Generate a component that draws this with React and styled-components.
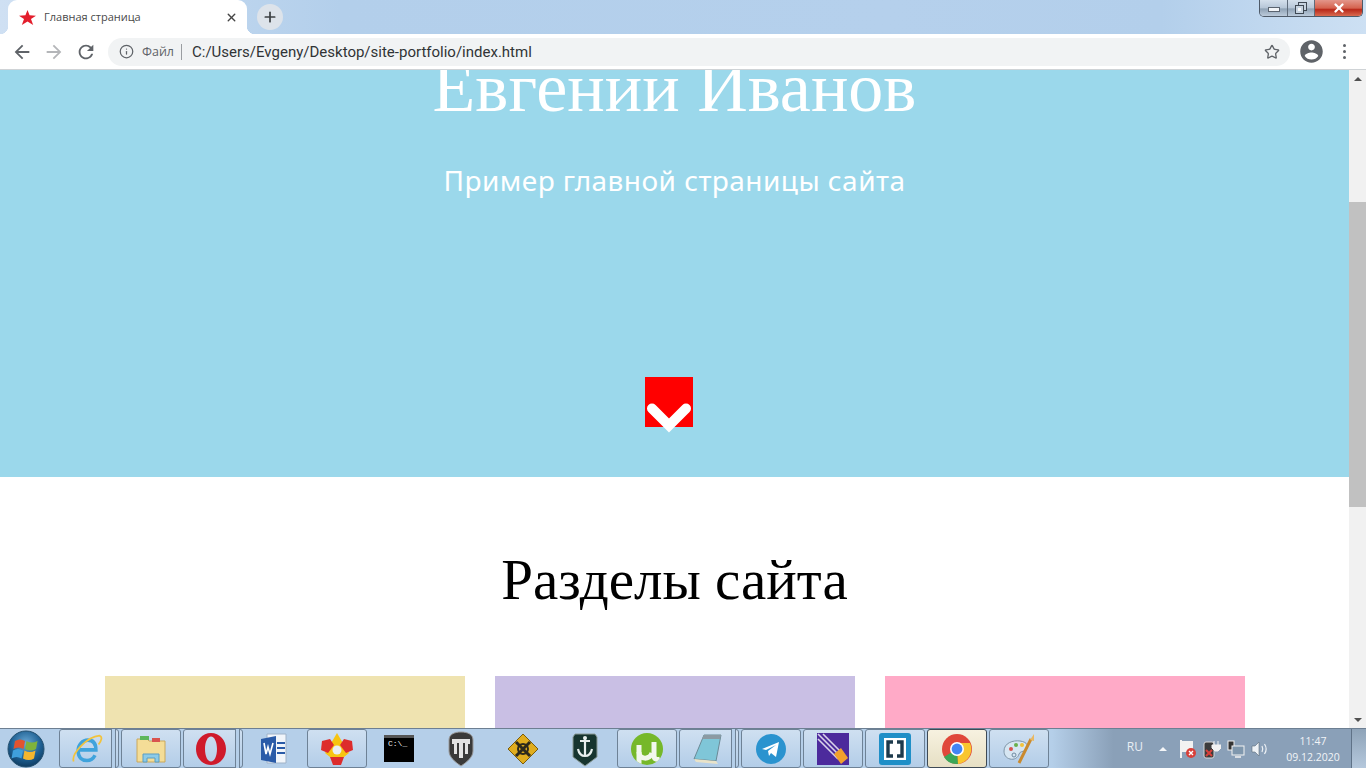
import styled, { createGlobalStyle } from "styled-components";
import { Info, Star, X, Plus } from "lucide-react";

const GlobalStyle = createGlobalStyle`
  html, body {
    margin: 0;
    padding: 0;
    width: 100%;
    height: 100%;
    overflow: hidden;
  }
  * {
    box-sizing: border-box;
  }
`;

const sections = ["#efe3b0", "#c9bfe4", "#ffaac7"];

const arrowPath = "M20 11H7.83l5.59-5.59L12 4l-8 8 8 8 1.41-1.41L7.83 13H20v-2z";

export default function App() {
  return (
    <>
      <GlobalStyle />
      <Screen>
        <TabStrip>
          <Tab>
            <StarIcon />
            <TabTitle>Главная страница</TabTitle>
            <X size={13} strokeWidth={2.6} color="#444" />
          </Tab>
          <NewTab>
            <Plus size={16} strokeWidth={2.6} color="#3c4043" />
          </NewTab>
          <WindowButtons>
            <WinButton $w={28}>
              <MinGlyph />
            </WinButton>
            <WinButton $w={27}>
              <RestoreGlyph viewBox="0 0 12 12">
                <rect x="3.500" y="0.500" width="8" height="8" fill="#c6d3e0" stroke="#3f4954" />
                <rect x="0.500" y="3.500" width="8" height="8" fill="#c6d3e0" stroke="#3f4954" />
                <rect x="3" y="6" width="3" height="3" fill="#f4f6f8" />
              </RestoreGlyph>
            </WinButton>
            <CloseButton>
              <X size={14} strokeWidth={4} color="#fff" />
            </CloseButton>
          </WindowButtons>
        </TabStrip>

        <Toolbar>
          <NavIcon d={arrowPath} color="#5f6368" />
          <NavIcon d={arrowPath} color="#b4b6b9" flip />
          <NavIcon
            d="M17.65 6.35A7.958 7.958 0 0 0 12 4c-4.42 0-7.99 3.58-7.99 8s3.57 8 7.99 8c3.73 0 6.84-2.55 7.73-6h-2.08A5.99 5.99 0 0 1 12 18c-3.31 0-6-2.69-6-6s2.69-6 6-6c1.66 0 3.14.69 4.22 1.78L13 11h7V4l-2.35 2.35z"
            color="#5f6368"
          />
          <Omnibox>
            <Info size={15} strokeWidth={2} color="#5f6368" />
            <FileLabel>Файл</FileLabel>
            <Url>C:/Users/Evgeny/Desktop/site-portfolio/index.html</Url>
            <Star size={16} strokeWidth={2} color="#5f6368" />
          </Omnibox>
          <Avatar viewBox="0 0 24 24">
            <path
              fill="#5f6368"
              d="M12 2C6.48 2 2 6.48 2 12s4.48 10 10 10 10-4.48 10-10S17.52 2 12 2zm0 3c1.66 0 3 1.34 3 3s-1.34 3-3 3-3-1.34-3-3 1.34-3 3-3zm0 14.2c-2.5 0-4.71-1.28-6-3.22.03-1.99 4-3.08 6-3.08 1.99 0 5.97 1.09 6 3.08-1.29 1.94-3.5 3.22-6 3.22z"
            />
          </Avatar>
          <MenuDots>
            <i />
            <i />
            <i />
          </MenuDots>
        </Toolbar>

        <Viewport>
          <Page>
            <Hero>
              <HeroTitle>Евгении Иванов</HeroTitle>
              <HeroSub>Пример главной страницы сайта</HeroSub>
              <ScrollDown>
                <Chevron viewBox="0 0 48 50">
                  <polyline points="7,31.5 24,48.5 41,31.5" fill="none" stroke="#fff" strokeWidth="10" strokeLinecap="round" />
                </Chevron>
              </ScrollDown>
            </Hero>
            <Sections>
              <SectionTitle>Разделы сайта</SectionTitle>
              <Cards>
                {sections.map((c) => (
                  <Card key={c} $bg={c} />
                ))}
              </Cards>
            </Sections>
          </Page>
          <Scrollbar>
            <ScrollArrow $up />
            <ScrollTrack>
              <ScrollThumb />
            </ScrollTrack>
            <ScrollArrow />
          </Scrollbar>
        </Viewport>

        <Taskbar>
          <StartOrb>
            <svg width="38" height="38" viewBox="0 0 38 38">
              <defs>
                <radialGradient id="orb" cx="50%" cy="35%" r="70%">
                  <stop offset="0" stopColor="#6aaad6" />
                  <stop offset="0.6" stopColor="#1d5f92" />
                  <stop offset="1" stopColor="#0d3557" />
                </radialGradient>
              </defs>
              <circle cx="19" cy="19" r="18" fill="url(#orb)" stroke="#24506f" />
              <path d="M8 11q5-3 10 0l-1.500 8q-5-3-10 0z" fill="#e2532f" />
              <path d="M19.500 11q5 3 11 0l-1.500 8q-5 3-11 0z" fill="#7fb33c" />
              <path d="M6 20.500q5-3 10 0l-1.500 8q-5-3-10 0z" fill="#3f9fdc" />
              <path d="M17.500 20.500q5 3 11 0l-1.500 8q-5 3-11 0z" fill="#f4b62e" />
            </svg>
          </StartOrb>
          <Pinned>
            <Slot $on $stack>
              <svg width="32" height="34" viewBox="0 0 36 36">
                <path d="M8 19h20c0-8-4-11-9-11-6 0-11 5-11 12 0 8 5 11 10 11 4 0 7-2 9-6" fill="none" stroke="#3fa3dc" strokeWidth="4" />
                <path d="M3 32C0 24 18 4 32 3c4 1 2 6-1 10" fill="none" stroke="#f2c33c" strokeWidth="2" />
              </svg>
            </Slot>
            <Slot $on>
              <svg width="34" height="34" viewBox="0 0 34 34">
                <path d="M3 7h10l2 2h16v21H3z" fill="#f4dd97" stroke="#c9a85c" />
                <rect x="6" y="4" width="9" height="4" fill="#5db75d" />
                <rect x="18" y="6" width="8" height="4" fill="#d9534f" />
                <path d="M9 30v-8h16v8h-4v-4h-8v4z" fill="#8ccbe8" stroke="#5a9dc2" />
              </svg>
            </Slot>
            <Slot $on $stack>
              <svg width="32" height="34" viewBox="0 0 32 34">
                <path
                  fillRule="evenodd"
                  d="M16 1c8.500 0 15 7 15 16s-6.500 16-15 16S1 26 1 17 7.500 1 16 1zm0 3.500c-3.500 0-6 5.500-6 12.500s2.500 12.500 6 12.500 6-5.500 6-12.500S19.500 4.500 16 4.500z"
                  fill="#cf1a2b"
                />
              </svg>
            </Slot>
            <Slot>
              <svg width="32" height="34" viewBox="0 0 32 34">
                <path d="M8 2h19v29H8z" fill="#f1f5fa" stroke="#9fb2c8" />
                <path d="M2 7l15-3v27L2 28z" fill="#2a5ba8" />
                <rect x="18" y="10" width="8" height="2" fill="#2a5ba8" />
                <rect x="18" y="15" width="8" height="2" fill="#2a5ba8" />
                <rect x="18" y="20" width="8" height="2" fill="#2a5ba8" />
                <path d="M5 11l2 11 2-7 2 7 3-11" fill="none" stroke="#fff" strokeWidth="1.6" />
              </svg>
            </Slot>
            <Slot $on>
              <svg width="36" height="36" viewBox="0 0 36 36">
                <path d="M18 2l7 12H11z" fill="#f7c411" />
                <path d="M11 14h14l5 8-5 4H11l-5-4z" fill="#f7c411" />
                <path d="M3 10l8-2 4 6-6 8-7-3z" fill="#dd2c2c" />
                <path d="M33 10l-8-2-4 6 6 8 7-3z" fill="#dd2c2c" />
                <path d="M11 26h14l-3 8h-8z" fill="#dd2c2c" />
                <circle cx="18" cy="19" r="4.5" fill="#e9eef4" />
              </svg>
            </Slot>
            <Slot>
              <CmdIcon>C:\_</CmdIcon>
            </Slot>
            <Slot>
              <svg width="26" height="36" viewBox="0 0 26 36">
                <path d="M13 1c6 0 12 2 12 8v11c0 6-6 11-12 15C7 31 1 26 1 20V9c0-6 6-8 12-8z" fill="#3a3a3a" stroke="#9a9a9a" />
                <path d="M4 8h18v5h-2v10h-3V12h-2v15h-4V12H9v11H6V13H4z" fill="#e3e3e3" />
              </svg>
            </Slot>
            <Slot>
              <svg width="32" height="32" viewBox="0 0 32 32">
                <path d="M16 1l15 15-15 15L1 16z" fill="#e0ad1e" stroke="#7a5c0c" />
                <path d="M9 9l14 14M23 9L9 23" stroke="#2d2a1c" strokeWidth="3" />
                <circle cx="16" cy="16" r="5" fill="none" stroke="#2d2a1c" strokeWidth="2" />
              </svg>
            </Slot>
            <Slot>
              <svg width="26" height="36" viewBox="0 0 26 36">
                <path d="M3 3h20l2 3v20l-12 9L1 26V6z" fill="#17352f" stroke="#8a9a96" />
                <path d="M13 6v18M8 10h10M6 18c1 5 4 7 7 7s6-2 7-7" fill="none" stroke="#e8efed" strokeWidth="2.2" />
                <circle cx="13" cy="7" r="2" fill="#e8efed" />
              </svg>
            </Slot>
            <Slot $on>
              <svg width="34" height="34" viewBox="0 0 34 34">
                <defs>
                  <clipPath id="utc">
                    <circle cx="17" cy="17" r="16" />
                  </clipPath>
                </defs>
                <circle cx="17" cy="17" r="16" fill="#76b82a" />
                <g clipPath="url(#utc)" fill="none" stroke="#f2f7ec" strokeWidth="5">
                  <path d="M9 13v21" />
                  <path d="M9 20c0 8 11 8 13 1" />
                  <path d="M24 10v14c0 3 3 4 6 3" />
                </g>
              </svg>
            </Slot>
            <Slot $on $stack>
              <svg width="32" height="34" viewBox="0 0 32 34">
                <path d="M3 27L13 3h17l-5 26z" fill="#7fc6d8" stroke="#6a8a96" />
                <path d="M13 3h17l-1 4H11z" fill="#8c9aa3" />
                <path d="M3 27l22 2 2 3-22-2z" fill="#e9e3c9" />
              </svg>
            </Slot>
            <Slot $on>
              <svg width="30" height="30" viewBox="0 0 30 30">
                <circle cx="15" cy="15" r="15" fill="#2a93cf" />
                <path d="M6 15l17-7-3 15-5-4-2 3-1-5 8-6-10 5z" fill="#fff" />
              </svg>
            </Slot>
            <Slot $on>
              <svg width="32" height="32" viewBox="0 0 32 32">
                <rect width="32" height="32" fill="#4c2a9c" />
                <path d="M1 1l22 22M6 1l21 21M1 6l20 20" stroke="#d9d2ea" strokeWidth="1.6" />
                <path d="M17 21l7-6 7 10-7 6z" fill="#f2a02d" />
              </svg>
            </Slot>
            <Slot $on>
              <svg width="32" height="32" viewBox="0 0 32 32">
                <rect width="32" height="32" rx="3" fill="#1f8fc7" />
                <rect x="5" y="5" width="22" height="22" fill="#fff" />
                <path d="M14 9H9v14h5M18 9h5v14h-5" fill="none" stroke="#1d3a4c" strokeWidth="3.4" />
              </svg>
            </Slot>
            <Slot $active>
              <svg width="32" height="32" viewBox="0 0 32 32">
                <circle cx="16" cy="16" r="15" fill="#e0483a" />
                <path d="M16 16L3 24A15 15 0 0 0 17 31z" fill="#3aa757" />
                <path d="M16 10h13a15 15 0 0 1-12 21z" fill="#f9c62f" />
                <circle cx="16" cy="16" r="7" fill="#fff" />
                <circle cx="16" cy="16" r="5.4" fill="#4285f4" />
              </svg>
            </Slot>
            <Slot $on>
              <svg width="34" height="34" viewBox="0 0 34 34">
                <path d="M2 19c0-8 9-11 16-10 8 1 9 6 6 9-3 2-6 1-7 4-1 4-5 6-9 5-4-1-6-4-6-8z" fill="#d6e6f2" stroke="#7f95a8" />
                <circle cx="9" cy="17" r="2" fill="#d9534f" />
                <circle cx="14" cy="13" r="2" fill="#6ab04c" />
                <circle cx="20" cy="13" r="2" fill="#f2c33c" />
                <circle cx="12" cy="23" r="2" fill="none" stroke="#6f8aa0" />
                <path d="M17 31L29 7" stroke="#c98a2e" strokeWidth="3" />
                <path d="M28 8l4-6v7z" fill="#e9b863" />
              </svg>
            </Slot>
          </Pinned>
          <Tray>
            <Lang>RU</Lang>
            <TrayUp />
            <svg width="18" height="20" viewBox="0 0 18 20">
              <path d="M2 1v18" stroke="#f2f2f2" strokeWidth="2" />
              <path d="M3 2h11v11H3z" fill="#f2f2f2" />
              <circle cx="12" cy="14" r="5" fill="#d8403a" />
              <path d="M10 12l4 4M14 12l-4 4" stroke="#fff" strokeWidth="1.4" />
            </svg>
            <svg width="18" height="20" viewBox="0 0 18 20">
              <rect x="1" y="3" width="10" height="16" rx="2" fill="#3c3c3c" stroke="#d8d8d8" />
              <path d="M11 2v4M15 2v4M9 6h9v3l-3 3h-3l-3-3z" fill="#f2f2f2" stroke="#f2f2f2" />
              <path d="M3 11l6 6M9 11l-6 6" stroke="#d8403a" strokeWidth="2" />
            </svg>
            <svg width="18" height="18" viewBox="0 0 18 18">
              <rect x="1" y="1" width="6" height="9" fill="#333" stroke="#f2f2f2" />
              <rect x="5" y="6" width="12" height="9" fill="#7f97ad" stroke="#f2f2f2" />
              <path d="M8 17h6" stroke="#f2f2f2" strokeWidth="1.5" />
            </svg>
            <svg width="18" height="18" viewBox="0 0 18 18">
              <path d="M1 6h3l4-4v14l-4-4H1z" fill="#eef2f6" stroke="#5b6b7a" strokeWidth="0.6" />
              <path d="M11 6c1 2 1 4 0 6M13.500 4c2 3 2 7 0 10" fill="none" stroke="#eef2f6" strokeWidth="1.2" />
            </svg>
            <Clock>
              <span>11:47</span>
              <span>09.12.2020</span>
            </Clock>
            <ShowDesktop />
          </Tray>
        </Taskbar>
      </Screen>
    </>
  );
}

function StarIcon() {
  return (
    <svg width="17" height="15" viewBox="0 0 18 16" preserveAspectRatio="none">
      <path d="M9 0l2.200 5.600L18 6l-5.300 3.600L15 16 9 12.300 3 16l2.300-6.400L0 6l6.800-.4z" fill="#e31e2c" />
    </svg>
  );
}

function NavIcon({ d, color, flip }) {
  return (
    <NavSvg viewBox="0 0 24 24" $flip={flip}>
      <path d={d} fill={color} />
    </NavSvg>
  );
}

const Screen = styled.div`
  width: 1366px;
  height: 768px;
  display: flex;
  flex-direction: column;
  overflow: hidden;
  background: #fff;
  font-family: "Liberation Sans", sans-serif;
`;

const TabStrip = styled.div`
  height: 34px;
  flex: none;
  display: flex;
  align-items: flex-end;
  padding-left: 8px;
  background: linear-gradient(90deg, #cfe0f3 0%, #b3cfeb 25%, #b5d0ec 65%, #b3cfeb 85%, #cde0f3 100%);
`;

const Tab = styled.div`
  position: relative;
  width: 239px;
  height: 34px;
  display: flex;
  align-items: center;
  padding: 0 9px 0 11px;
  background: #fff;
  border-radius: 9px 9px 0 0;

  &::before,
  &::after {
    content: "";
    position: absolute;
    bottom: 0;
    width: 8px;
    height: 8px;
  }

  &::before {
    left: -8px;
    background: radial-gradient(circle at 0 0, transparent 8px, #fff 8.5px);
  }

  &::after {
    right: -8px;
    background: radial-gradient(circle at 100% 0, transparent 8px, #fff 8.5px);
  }
`;

const TabTitle = styled.span`
  flex: 1;
  margin-left: 8px;
  margin-top: -2px;
  font-family: "Open Sans", sans-serif;
  font-size: 11px;
  color: #4a4a4a;
`;

const NewTab = styled.div`
  width: 26px;
  height: 26px;
  margin: 0 0 4px 10px;
  border-radius: 50%;
  background: #dde3ea;
  display: flex;
  align-items: center;
  justify-content: center;
`;

const WindowButtons = styled.div`
  margin-left: auto;
  margin-right: 3px;
  align-self: flex-start;
  height: 17px;
  display: flex;
  border: 1px solid #4e5a68;
  border-top: none;
  border-radius: 0 0 5px 5px;
  overflow: hidden;
`;

const WinButton = styled.div`
  width: ${(p) => p.$w}px;
  display: flex;
  align-items: center;
  justify-content: center;
  border-right: 1px solid #5f6c7b;
  background: linear-gradient(#d4e0ec, #b6c6d7 50%, #8fa2b5 55%, #bccbdb);
`;

const MinGlyph = styled.div`
  width: 12px;
  height: 5px;
  margin-top: 3px;
  background: #f2f5f8;
  border: 1px solid #5a6470;
`;

const RestoreGlyph = styled.svg`
  width: 12px;
  height: 12px;
`;

const CloseButton = styled.div`
  width: 47px;
  display: flex;
  align-items: center;
  justify-content: center;
  background: linear-gradient(#e3968a, #d5634f 50%, #b9291a 60%, #d96b50);
`;

const Toolbar = styled.div`
  height: 36px;
  flex: none;
  display: flex;
  align-items: center;
  padding: 0 14px 0 11px;
  background: #fff;
  border-bottom: 1px solid #cfd3d6;
`;

const NavSvg = styled.svg`
  width: 22px;
  height: 22px;
  margin-right: 10px;
  transform: ${(p) => (p.$flip ? "scaleX(-1)" : "none")};
`;

const Omnibox = styled.div`
  width: 1182px;
  height: 28px;
  margin-left: 1px;
  display: flex;
  align-items: center;
  padding: 0 10px 0 11px;
  border-radius: 14px;
  background: #f1f3f4;
`;

const FileLabel = styled.span`
  margin-left: 8px;
  padding-right: 7px;
  border-right: 1px solid #9a9da1;
  font-family: "Open Sans", sans-serif;
  font-size: 12.5px;
  line-height: 16px;
  color: #5f6368;
`;

const Url = styled.span`
  flex: 1;
  margin: 1px 0 0 10px;
  font-family: Roboto, sans-serif;
  font-size: 15px;
  color: #303336;
`;

const Avatar = styled.svg`
  width: 27px;
  height: 27px;
  margin-left: 8px;
`;

const MenuDots = styled.div`
  margin-left: 18px;
  display: flex;
  flex-direction: column;
  gap: 3px;

  i {
    width: 3px;
    height: 3px;
    border-radius: 50%;
    background: #5f6368;
  }
`;

const Viewport = styled.div`
  height: 658px;
  flex: none;
  display: flex;
  overflow: hidden;
`;

const Page = styled.div`
  flex: 1;
  min-width: 0;
`;

const Hero = styled.section`
  height: 407px;
  overflow: hidden;
  background: #9bd8eb;
  color: #fff;
  display: flex;
  flex-direction: column;
  align-items: center;
`;

const HeroTitle = styled.h1`
  margin: -22px 0 0;
  font-family: "Liberation Serif", serif;
  font-weight: 400;
  font-size: 70px;
  line-height: 80px;
`;

const HeroSub = styled.p`
  margin: 34px 0 0;
  font-family: "Noto Sans", sans-serif;
  font-size: 28px;
  letter-spacing: 0.45px;
  line-height: 36px;
`;

const ScrollDown = styled.div`
  position: relative;
  width: 48px;
  height: 50px;
  margin: 179px 11px 0 0;
  background: #ff0000;
`;

const Chevron = styled.svg`
  position: absolute;
  left: 0;
  top: 0;
  width: 48px;
  height: 50px;
  overflow: visible;
`;

const Sections = styled.section`
  padding-top: 71px;
  background: #fff;
`;

const SectionTitle = styled.h2`
  margin: 0;
  text-align: center;
  font-family: "Liberation Serif", serif;
  font-weight: 400;
  font-size: 57px;
  line-height: 64px;
  color: #000;
`;

const Cards = styled.div`
  display: flex;
  justify-content: center;
  gap: 30px;
  margin-top: 64px;
`;

const Card = styled.div`
  width: 360px;
  height: 240px;
  background: ${(p) => p.$bg};
`;

const Scrollbar = styled.div`
  width: 17px;
  flex: none;
  display: flex;
  flex-direction: column;
  background: #f1f1f1;
`;

const ScrollArrow = styled.div`
  height: 17px;
  flex: none;
  display: flex;
  align-items: center;
  justify-content: center;

  &::after {
    content: "";
    border-left: 4px solid transparent;
    border-right: 4px solid transparent;
    ${(p) => (p.$up ? "border-bottom: 4px solid #505050;" : "border-top: 4px solid #505050;")}
  }
`;

const ScrollTrack = styled.div`
  flex: 1;
  padding-top: 115px;
`;

const ScrollThumb = styled.div`
  height: 305px;
  background: #c1c1c1;
`;

const Taskbar = styled.div`
  height: 40px;
  flex: none;
  display: flex;
  align-items: center;
  border-top: 1px solid #6d7f92;
  background: linear-gradient(90deg, #b5cfe9 0%, #b5cfe9 77%, #8aa0b8 81.500%, #8aa0b8 100%);
`;

const StartOrb = styled.div`
  width: 58px;
  flex: none;
  display: flex;
  justify-content: center;
  padding-right: 6px;
`;

const Pinned = styled.div`
  display: flex;
  gap: 2px;
  height: 100%;
  padding-left: 1px;
`;

const Slot = styled.div`
  position: relative;
  width: 60px;
  height: 39px;
  display: flex;
  align-items: center;
  justify-content: center;
  padding-right: ${(p) => (p.$stack ? "5px" : "0")};
  border: 1px solid ${(p) => (p.$active ? "#3e4a56" : p.$on ? "#6e8296" : "transparent")};
  border-radius: 3px;
  background: ${(p) =>
    p.$active
      ? "linear-gradient(#f7f2e0, #e6dfc4)"
      : p.$on
        ? "linear-gradient(#cfe0f1, #b3cde8)"
        : "transparent"};

  ${(p) =>
    p.$stack &&
    `
    &::after {
      content: "";
      position: absolute;
      right: 2px;
      top: -1px;
      bottom: -1px;
      width: 3px;
      background: #b5cfe9;
      border-left: 1px solid #6e8296;
      border-right: 1px solid #6e8296;
    }
  `}
`;

const CmdIcon = styled.div`
  width: 30px;
  height: 27px;
  background: #000;
  border-top: 3px solid #555;
  color: #eee;
  font-family: "Liberation Mono", monospace;
  font-size: 8px;
  line-height: 12px;
  padding-left: 4px;
`;

const Tray = styled.div`
  flex: 1;
  display: flex;
  align-items: center;
  justify-content: flex-end;
  gap: 6px;
  height: 100%;
`;

const Lang = styled.span`
  margin-right: 10px;
  margin-top: -5px;
  font-family: "Open Sans", sans-serif;
  font-size: 12px;
  color: #e8eef4;
`;

const TrayUp = styled.div`
  margin-right: 6px;
  border-left: 4px solid transparent;
  border-right: 4px solid transparent;
  border-bottom: 4px solid #f4f6f8;
`;

const Clock = styled.div`
  width: 76px;
  display: flex;
  flex-direction: column;
  align-items: center;
  font-family: "Open Sans", sans-serif;
  font-size: 10.5px;
  line-height: 16px;
  color: #f1f4f7;
`;

const ShowDesktop = styled.div`
  width: 15px;
  margin-left: -6px;
  height: 100%;
  border-left: 1px solid #5f7287;
  background: linear-gradient(#8ea3b8, #b5c8dc);
`;
